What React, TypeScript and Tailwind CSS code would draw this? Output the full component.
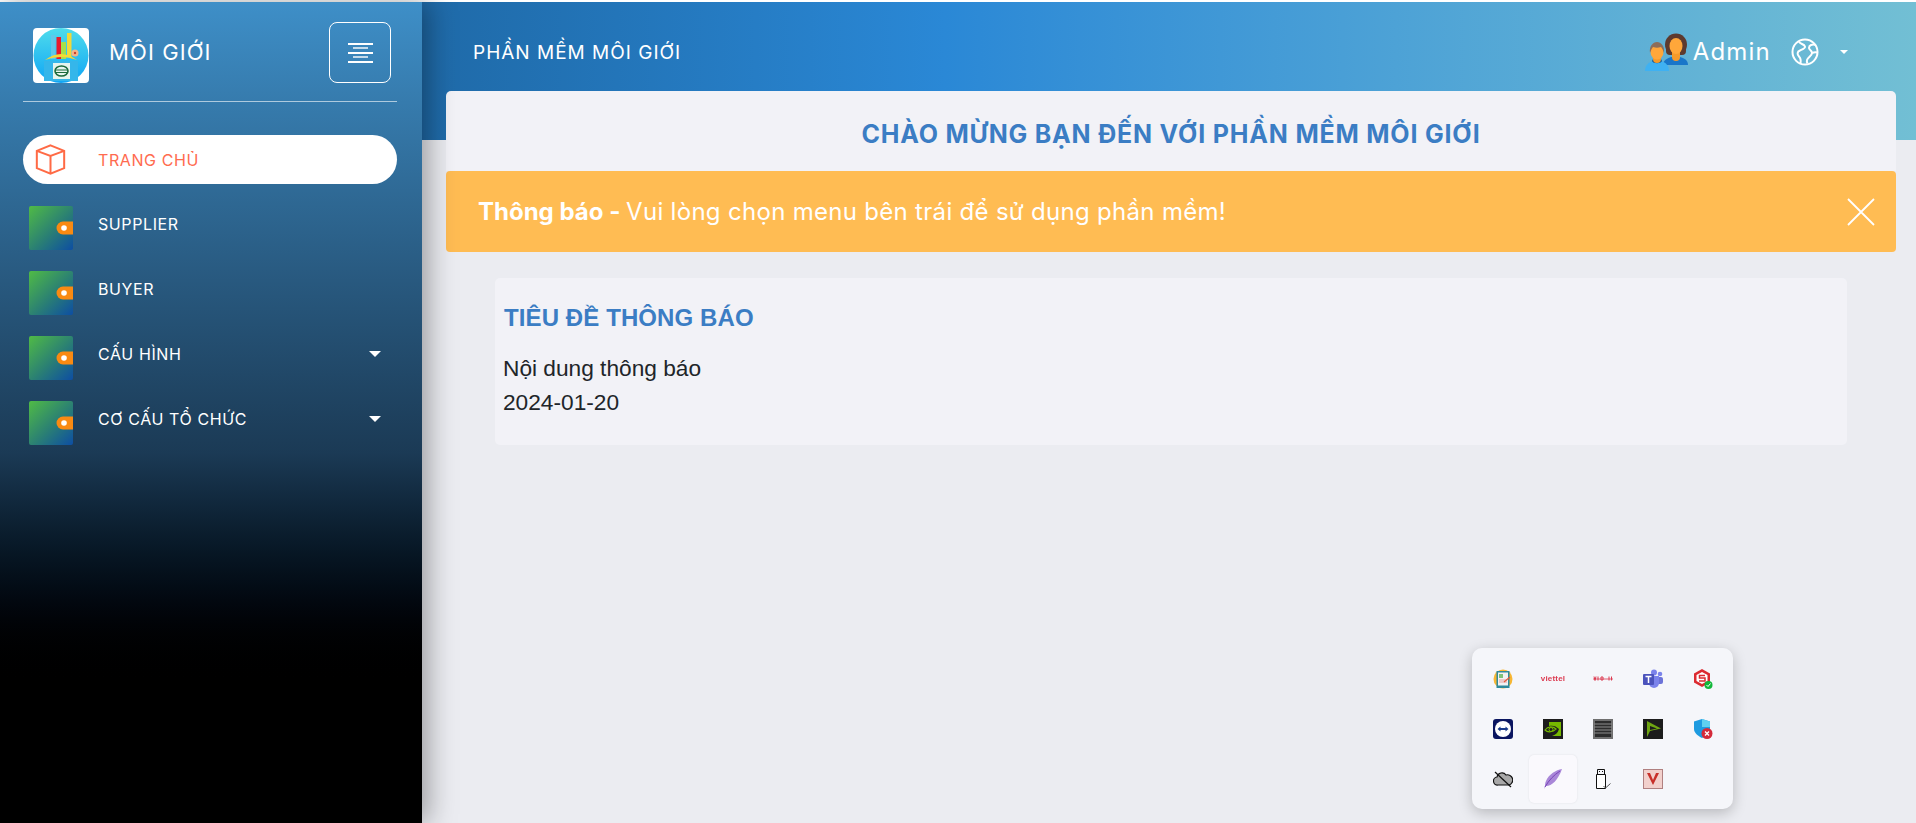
const menu = [
  { label: "SUPPLIER", caret: false },
  { label: "BUYER", caret: false },
  { label: "CẤU HÌNH", caret: true },
  { label: "CƠ CẤU TỔ CHỨC", caret: true },
];

function Logo() {
  return (
    <svg width="56" height="55" viewBox="0 0 56 55" className="rounded-[4px] bg-white shrink-0 mt-[6px]">
      <defs>
        <linearGradient id="logoBg" x1="0" y1="0" x2="0" y2="1">
          <stop offset="0" stopColor="#4fdcec" />
          <stop offset="1" stopColor="#0fa5f5" />
        </linearGradient>
      </defs>
      <circle cx="28" cy="27.5" r="27.5" fill="url(#logoBg)" />
      <rect x="18" y="7" width="4.5" height="24" fill="#5fc8ea" />
      <rect x="23.5" y="9" width="4.5" height="22" fill="#e8192c" />
      <rect x="28" y="14" width="5" height="17" fill="#a5e04c" />
      <rect x="34" y="5" width="4.5" height="24" fill="#f2d83b" />
      <path d="M12 32 Q28 20 44 32 Q28 26 12 32Z" fill="#f5d936" />
      <circle cx="42" cy="25" r="3.5" fill="#f6b48a" />
      <circle cx="42" cy="25" r="1.2" fill="#c8402a" />
      <rect x="11" y="33" width="34" height="20" fill="#35b6ea" />
      <rect x="20" y="35" width="17" height="16" fill="#e6f4ee" />
      <ellipse cx="28.500" cy="43" rx="6.500" ry="5" fill="none" stroke="#1c6a3c" strokeWidth="1.600" />
      <path d="M22 42h13M22 44.500h13" stroke="#1c6a3c" strokeWidth="1.200" />
    </svg>
  );
}

function Cube() {
  return (
    <svg width="31" height="31" viewBox="0 0 34 34" fill="none" stroke="#ff6a45" strokeWidth="2.200" className="shrink-0">
      <path d="M17 1.500 32 7.500v19l-15 6-15-6v-19z" />
      <path d="M2 7.500l15 5.500 15-5.500M17 13v19.500" />
    </svg>
  );
}

function Wallet() {
  return (
    <svg width="44" height="44" viewBox="0 0 44 44" className="shrink-0">
      <defs>
        <linearGradient id="walletBg" x1="0" y1="0" x2="1" y2="1">
          <stop offset="0" stopColor="#50bb45" />
          <stop offset="0.55" stopColor="#2a7f74" />
          <stop offset="1" stopColor="#0d4ea3" />
        </linearGradient>
      </defs>
      <rect width="44" height="44" rx="2" fill="url(#walletBg)" />
      <path d="M44 15.500H34a6.500 6.500 0 0 0 0 13h10z" fill="#f98a12" />
      <circle cx="35" cy="22" r="2.800" fill="#fff" />
    </svg>
  );
}

function Caret({ size = "big" }: { size?: "big" | "small" }) {
  return (
    <svg
      width={size === "big" ? 12 : 8}
      height={size === "big" ? 6 : 4}
      viewBox="0 0 12 6"
      className="shrink-0"
    >
      <path d="M0 0h12L6 6z" fill="#fff" />
    </svg>
  );
}

function People() {
  return (
    <svg width="43" height="38" viewBox="0 0 43 38" className="shrink-0">
      <path d="M18 32c0-5 5-7 8-8h9c4 1 8 3 8 8z" fill="#1976c9" />
      <circle cx="31" cy="11.500" r="11" fill="#5d3a2e" />
      <rect x="21" y="12" width="20" height="10" rx="4" fill="#5d3a2e" />
      <path d="M27 19h8v5a4 4 0 0 1-8 0z" fill="#f59a2a" />
      <ellipse cx="31" cy="13" rx="6.500" ry="8" fill="#ffa73a" />
      <path d="M0 38c0-6 4-9 8-10h8c4 1 8 4 8 10z" fill="#3fb1f2" />
      <path d="M7 28c1 3 9 3 10 0l-1-2H8z" fill="#115a9e" />
      <path d="M8 23h8v3a4 4 0 0 1-8 0z" fill="#f59a2a" />
      <ellipse cx="12" cy="19" rx="6.500" ry="7.500" fill="#ffa73a" />
      <path d="M5 20c-1-7 3-11 7-11s8 4 7 11c-1-3-2-5-3-6-3 1-5 1-8 0-1 1-2 3-3 6z" fill="#8d6e5a" />
    </svg>
  );
}

function Globe() {
  return (
    <svg width="28" height="28" viewBox="0 0 28 28" fill="none" stroke="#fff" strokeWidth="2">
      <circle cx="14" cy="14" r="12.500" />
      <path d="M8 3.500c1 3 5 2 6 5 .5 2-3 3-5 4-3 1-3 4-1 6 1.500 1.500 2 4 1.500 7" />
      <path d="M25 7c-4-1-7 0-7 3 0 2 3 2 3 5 0 3-4 4-5 7-.5 1.500 0 2.500 .5 3.500" />
      <path d="M21 15c2-1 4-1 5.500-.5" />
    </svg>
  );
}

function TrayIcon({ children, active = false }: { children: React.ReactNode; active?: boolean }) {
  return (
    <div
      className={`w-[48px] h-[48px] flex items-center justify-center rounded-[5px] ${
        active ? "bg-[#faf9fd] shadow-[0_0_2px_rgba(0,0,0,0.1)]" : ""
      }`}
    >
      {children}
    </div>
  );
}

function Tray() {
  return (
    <div className="fixed left-[1472px] top-[648px] w-[261px] h-[161px] rounded-[10px] bg-[#f5f6fa] shadow-[0_4px_14px_rgba(0,0,0,0.22)] pl-[6px] pt-[6px] grid grid-cols-[repeat(5,50px)] auto-rows-[50px] items-center justify-items-center">
      <TrayIcon>
        <svg width="20" height="20" viewBox="0 0 20 20">
          <circle cx="10" cy="10" r="9.500" fill="#f7b733" />
          <rect x="3.500" y="2" width="13" height="17" fill="#2f8a9c" />
          <rect x="5" y="3.500" width="10" height="13" fill="#f2f2f2" />
          <rect x="6" y="5" width="4" height="4" fill="#7fc37a" />
          <path d="M6 11h8M6 13h8" stroke="#e7a0a0" />
          <path d="M11 13l6-5" stroke="#e65a3a" strokeWidth="1.200" />
        </svg>
      </TrayIcon>
      <TrayIcon>
        <span className="font-['Liberation_Sans',sans-serif] text-[8px] font-bold leading-none tracking-[0.2px] text-[#dc3a50]">
          viettel
        </span>
      </TrayIcon>
      <TrayIcon>
        <svg width="20" height="8" viewBox="0 0 20 8" fill="none" stroke="#dc3a50">
          <path d="M0 4h20" strokeWidth="0.800" />
          <path d="M1 1.500l1 4 1-4M5 1.500v4M8 2h2v3H8zM16 1.500v4M18.500 1.500v4" strokeWidth="1" />
        </svg>
      </TrayIcon>
      <TrayIcon>
        <svg width="20" height="20" viewBox="0 0 20 20">
          <circle cx="17" cy="5" r="2.300" fill="#7b83eb" />
          <rect x="13" y="8" width="7" height="7" rx="2" fill="#6c73d8" />
          <circle cx="11" cy="3.500" r="3" fill="#7b83eb" />
          <path d="M6 7h10v7a5 5 0 0 1-10 0z" fill="#7b83eb" />
          <rect x="0" y="5" width="11" height="11" rx="1" fill="#4b53bc" />
          <path d="M2.500 7.500h6M5.500 7.500v6.500" stroke="#fff" strokeWidth="1.500" />
        </svg>
      </TrayIcon>
      <TrayIcon>
        <svg width="20" height="20" viewBox="0 0 20 20">
          <path d="M9 0l8 4.500v9L9 18l-8-4.500v-9z" fill="#dc2a30" />
          <path d="M9 3l5.500 3v6L9 15l-5.500-3V6z" fill="#fff" />
          <path d="M12 6.500H6.500v2.500H12v3H6" fill="none" stroke="#dc2a30" strokeWidth="1.500" />
          <circle cx="15.500" cy="16" r="4" fill="#12b83a" />
          <path d="M13.500 16l1.500 1.500 2.500-3" stroke="#fff" strokeWidth="1" fill="none" />
        </svg>
      </TrayIcon>

      <TrayIcon>
        <svg width="20" height="20" viewBox="0 0 20 20">
          <rect width="20" height="20" rx="3" fill="#0a1560" />
          <circle cx="10" cy="10" r="8" fill="#fff" />
          <path d="M4.500 10l3-2.500v1.500h5V7.500l3 2.500-3 2.500V11h-5v1.500z" fill="#1a3a8a" />
        </svg>
      </TrayIcon>
      <TrayIcon>
        <svg width="20" height="20" viewBox="0 0 20 20">
          <rect width="20" height="20" fill="#1c1c1c" />
          <path d="M6 3h12v14H9c3-1 6-3 7-7-3-3-6-4-10-3z" fill="#76b900" />
          <path d="M2 11c3-4 8-4 11-1-3 3-8 4-11 1z" fill="none" stroke="#76b900" strokeWidth="1.200" />
          <circle cx="8" cy="10.500" r="2" fill="none" stroke="#76b900" />
        </svg>
      </TrayIcon>
      <TrayIcon>
        <svg width="20" height="20" viewBox="0 0 20 20">
          <rect width="20" height="20" fill="#6f6f6f" />
          <rect x="2" y="2" width="16" height="16" fill="#2c2c2c" />
          <path d="M1 5h18M1 8h18M1 11h18M1 14h18" stroke="#8c8c8c" strokeWidth="1.200" />
        </svg>
      </TrayIcon>
      <TrayIcon>
        <svg width="20" height="20" viewBox="0 0 20 20">
          <rect width="20" height="20" fill="#1c1c1c" />
          <path d="M4 2l14 7.500L7 12l-3 6z" fill="#6fa512" />
          <path d="M7 7l7 2.500-7 1.500zM7 12.500l5-1-5 3z" fill="#1c1c1c" />
        </svg>
      </TrayIcon>
      <TrayIcon>
        <svg width="20" height="20" viewBox="0 0 20 20">
          <path d="M9 0l8 2.500V10c0 4-4 7-8 9-4-2-8-5-8-9V2.500z" fill="#1e9be0" />
          <path d="M9 0l8 2.500V8H9z" fill="#5fd0f0" />
          <circle cx="14" cy="14.500" r="5.500" fill="#d42a3a" />
          <path d="M12 12.500l4 4M16 12.500l-4 4" stroke="#fff" strokeWidth="1.300" />
        </svg>
      </TrayIcon>

      <TrayIcon>
        <svg width="20" height="18" viewBox="0 0 20 18">
          <path d="M5 15a4 4 0 0 1-1-8 5 5 0 0 1 9-2 4.500 4.500 0 0 1 3 10z" fill="#a8a8a8" stroke="#111" strokeWidth="1.200" />
          <path d="M2 2l16 15" stroke="#111" strokeWidth="1.200" />
        </svg>
      </TrayIcon>
      <TrayIcon active>
        <svg width="20" height="20" viewBox="0 0 20 20">
          <path d="M19 0C13 1 6 5 3 12c-1 2-1 4-1 5l-1 3 2-3c6 0 12-6 16-17z" fill="#a987d8" />
          <path d="M17 2C11 6 6 11 2 18" stroke="#7a45b8" strokeWidth="1" fill="none" />
        </svg>
      </TrayIcon>
      <TrayIcon>
        <svg width="20" height="20" viewBox="0 0 20 20" fill="none" stroke="#111" strokeWidth="1">
          <path d="M4.500 .500h7v5h-7z" />
          <path d="M3.500 5.500h9v14h-9z" fill="#fff" />
          <path d="M6 2.500h1M9 2.500h1" />
          <path d="M10.500 17l2 2 5-4.500" stroke="#555" fill="none" />
        </svg>
      </TrayIcon>
      <TrayIcon>
        <svg width="20" height="20" viewBox="0 0 20 20">
          <rect width="20" height="20" fill="#b08080" />
          <rect x="1" y="1" width="18" height="18" fill="#f2d0cc" />
          <path d="M4 4l6 12 6-12h-3l-3 7-3-7z" fill="#c8302a" />
        </svg>
      </TrayIcon>
    </div>
  );
}

export default function App() {
  return (
    <div className="w-full h-[823px] overflow-hidden flex flex-col bg-[#ebecf1] font-['Inter',sans-serif]">
      <div className="h-[2px] bg-white shrink-0" />
      <div className="flex flex-1 min-h-0">
        {/* sidebar */}
        <aside className="relative z-10 w-[422px] shrink-0 bg-gradient-to-b from-[#3e8fc8] via-[#1b3a55] via-[55%] to-black to-[84%] shadow-[6px_0_26px_rgba(0,0,0,0.35)] text-white">
          <div className="h-[99px] pl-[33px] pr-[31px] pt-[20px] flex items-start">
            <Logo />
            <span className="ml-[20px] mt-[16px] text-[22px] leading-[28px] tracking-[1.1px]">MÔI GIỚI</span>
            <button className="ml-auto w-[62px] h-[61px] border border-white rounded-[8px] flex flex-col items-center justify-center gap-[2.500px]">
              <span className="block w-[25px] h-[2px] bg-white" />
              <span className="block w-[15px] h-[2px] bg-white/70" />
              <span className="block w-[25px] h-[2px] bg-white" />
              <span className="block w-[15px] h-[2px] bg-white/70" />
              <span className="block w-[25px] h-[2px] bg-white" />
            </button>
          </div>
          <div className="ml-[23px] mr-[25px] h-px bg-white/60" />
          <nav className="pl-[23px] pr-[25px] pt-[33px]">
            <div className="h-[49px] rounded-full bg-white flex items-center pl-[12px] text-[16px] tracking-[0.6px] text-[#ff6b4f]">
              <Cube />
              <span className="ml-[32px]">TRANG CHỦ</span>
            </div>
            <ul className="mt-[22px] flex flex-col gap-[21px] pl-[6px] pr-[16px]">
              {menu.map((item) => (
                <li key={item.label} className="h-[44px] flex items-start text-[16px] tracking-[0.6px]">
                  <Wallet />
                  <span className="ml-[25px] leading-[36px]">{item.label}</span>
                  {item.caret && (
                    <span className="ml-auto mt-[15px]">
                      <Caret />
                    </span>
                  )}
                </li>
              ))}
            </ul>
          </nav>
        </aside>

        {/* main */}
        <main className="flex-1 min-w-0">
          <header className="h-[138px] bg-gradient-to-r from-[#1f6aa8] via-[#2a88d6] via-[35%] to-[#72bfd4] pl-[51px] pr-[68px] pt-[24px] flex items-start text-white">
            <span className="text-[19px] leading-[54px] tracking-[1px]">PHẦN MỀM MÔI GIỚI</span>
            <div className="ml-auto flex items-center h-[52px]">
              <People />
              <span className="ml-[5px] text-[24px] tracking-[1.200px]">Admin</span>
              <span className="ml-[20px]">
                <Globe />
              </span>
              <span className="ml-[21px]">
                <Caret size="small" />
              </span>
            </div>
          </header>

          <div className="-mt-[49px] ml-[24px] mr-[20px]">
            <div className="h-[80px] pt-[8px] rounded-t-[5px] bg-[#f2f2f7] flex items-center justify-center">
              <h1 className="text-[25px] font-bold tracking-[0.8px] text-[#3b7dc4]">CHÀO MỪNG BẠN ĐẾN VỚI PHẦN MỀM MÔI GIỚI</h1>
            </div>
            <div className="h-[81px] rounded-[4px] bg-[#ffbc53] flex items-center pl-[32px] pr-[21px] text-white text-[24px]">
              <span className="tracking-[0.3px]">
                <b className="font-bold tracking-normal">Thông báo - </b>Vui lòng chọn menu bên trái để sử dụng phần mềm!
              </span>
              <svg width="28" height="28" viewBox="0 0 28 28" className="ml-auto" stroke="#fff" strokeWidth="1.800">
                <path d="M1 1l26 26M27 1L1 27" />
              </svg>
            </div>
            <section className="mt-[26px] mx-[49px] h-[167px] rounded-[5px] bg-[#f2f2f7] pl-[8px] pt-[25px] font-['Liberation_Sans',sans-serif]">
              <h2 className="ml-[1px] text-[24px] font-bold leading-[30px] text-[#3b7dc4] tracking-[0.1px]">TIÊU ĐỀ THÔNG BÁO</h2>
              <p className="mt-[18px] text-[22.700px] leading-[34px] text-[#212529]">Nội dung thông báo</p>
              <p className="text-[22.700px] leading-[34px] text-[#212529]">2024-01-20</p>
            </section>
          </div>
        </main>
      </div>
      <Tray />
    </div>
  );
}
